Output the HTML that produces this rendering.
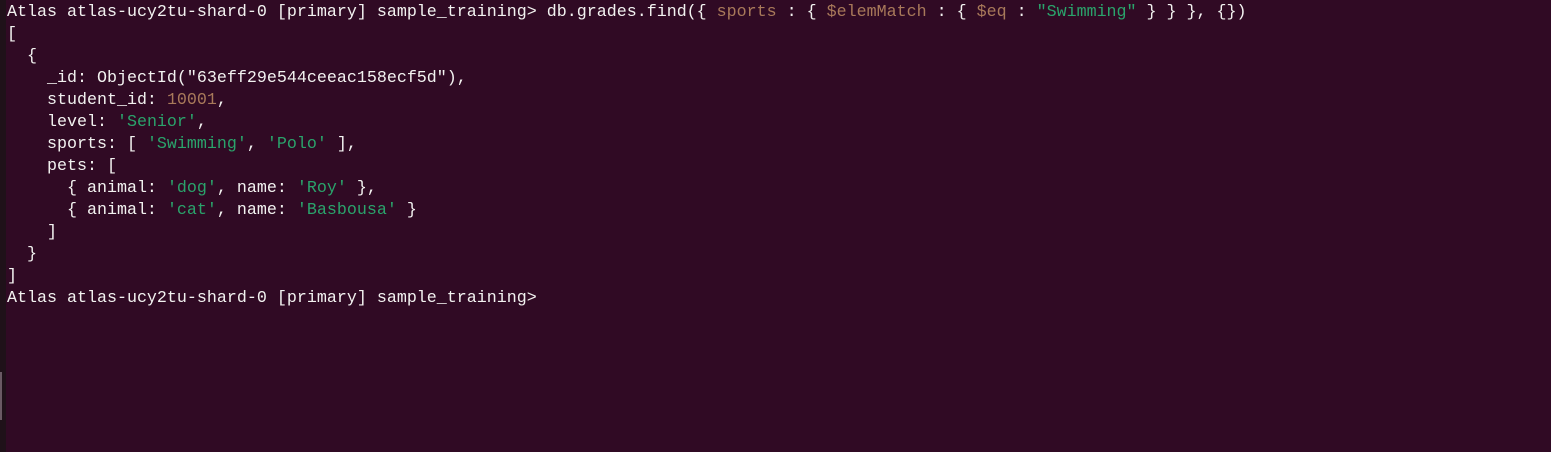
<!DOCTYPE html>
<html><head><meta charset="utf-8"><style>
html,body{margin:0;padding:0;}
body{width:1551px;height:452px;background:#300a24;position:relative;overflow:hidden;}
.strip{position:absolute;left:0;top:0;width:6px;height:452px;background:#1f1119;}
.bar{position:absolute;left:0;top:372px;width:2px;height:48px;background:#6a5a64;}
pre{position:absolute;left:7px;top:2px;margin:0;font-family:"Liberation Mono",monospace;font-size:16.67px;line-height:22px;color:#f2f2f0;}
.b{color:#a8795a}.g{color:#2aa36b}
</style></head><body>
<div class="strip"></div><div class="bar"></div>
<pre>Atlas atlas-ucy2tu-shard-0 [primary] sample_training&gt; db.grades.find({ <span class="b">sports</span> : { <span class="b">$elemMatch</span> : { <span class="b">$eq</span> : <span class="g">"Swimming"</span> } } }, {})
[
  {
    _id: ObjectId("63eff29e544ceeac158ecf5d"),
    student_id: <span class="b">10001</span>,
    level: <span class="g">'Senior'</span>,
    sports: [ <span class="g">'Swimming'</span>, <span class="g">'Polo'</span> ],
    pets: [
      { animal: <span class="g">'dog'</span>, name: <span class="g">'Roy'</span> },
      { animal: <span class="g">'cat'</span>, name: <span class="g">'Basbousa'</span> }
    ]
  }
]
Atlas atlas-ucy2tu-shard-0 [primary] sample_training&gt; </pre>
</body></html>
